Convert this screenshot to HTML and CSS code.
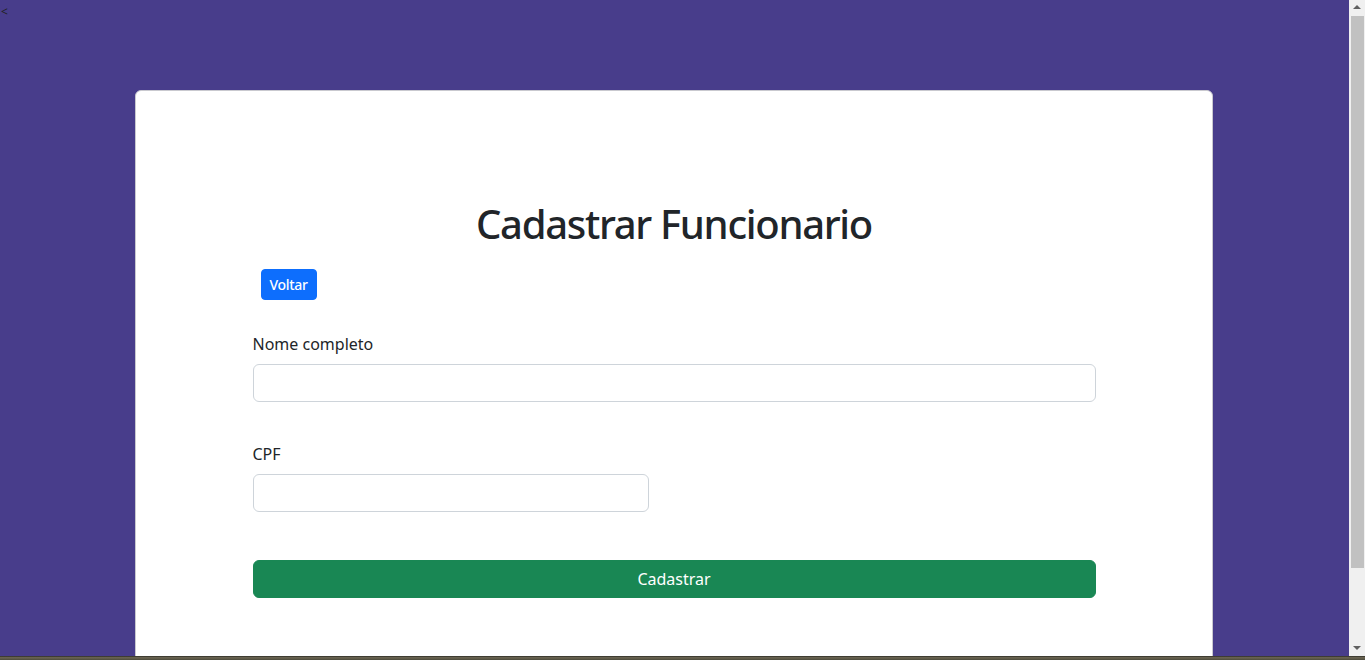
FILE: index.html
```html
<!DOCTYPE html>
<html lang="pt-BR">
<head>
<meta charset="utf-8">
<title>Cadastrar Funcionario</title>
<link rel="stylesheet" href="styles.css">
</head>
<body>
<div class="stray">&lt;</div>
<main class="card">
  <h1 class="title">Cadastrar Funcionario</h1>
  <div class="form">
    <div class="back-row"><a class="btn-back" href="#">Voltar</a></div>
    <div class="field field-nome">
      <label class="label" for="nome">Nome completo</label>
      <input class="input" id="nome" type="text">
    </div>
    <div class="field field-cpf">
      <label class="label" for="cpf">CPF</label>
      <input class="input input-short" id="cpf" type="text">
    </div>
    <button class="btn-submit" type="submit">Cadastrar</button>
  </div>
</main>
<div class="scrollbar">
  <div class="sb-arrow sb-up"></div>
  <div class="sb-thumb"></div>
  <div class="sb-arrow sb-down"></div>
</div>
<div class="taskbar"></div>
</body>
</html>
```
FILE: styles.css
```css
html { background: #483d8b; }
body {
  margin: 0;
  background: #483d8b;
  font-family: "Noto Sans", "Open Sans", sans-serif;
  color: #212529;
  line-height: 1.5;
  font-size: 16px;
}
.stray {
  font-size: 12px;
  line-height: 24px;
  height: 24px;
  padding-left: 1px;
  color: #222;
}
.card {
  margin: 66px 0 0 135px;
  width: 1076px;
  background: #fff;
  border: 1px solid #c9c9cf;
  border-radius: 6px;
  padding: 109px 0 152px;
}
.title {
  margin: 0 0 21px;
  text-align: center;
  font-size: 40px;
  font-weight: 500;
  line-height: 1.2;
  letter-spacing: -1.3px;
}
.form {
  width: 843px;
  margin: 0 auto;
}
.back-row { padding-left: 8px; margin-bottom: 32px; }
.btn-back {
  display: inline-block;
  background: #0d6efd;
  color: #fff;
  text-decoration: none;
  font-size: 14px;
  font-weight: 500;
  line-height: 21px;
  padding: 4px 8px;
  border: 1px solid #0d6efd;
  border-radius: 4px;
  letter-spacing: -0.3px;
}
.field-nome { margin-bottom: 40px; }
.field-cpf { margin-bottom: 48px; }
.label {
  display: block;
  margin-bottom: 8px;
  font-size: 16px;
  line-height: 24px;
}
.input {
  display: block;
  box-sizing: border-box;
  width: 100%;
  height: 38px;
  border: 1px solid #ced4da;
  border-radius: 6px;
  padding: 6px 12px;
  font: inherit;
  background: #fff;
}
.input-short { width: 396px; }
.btn-submit {
  display: block;
  width: 100%;
  height: 38px;
  background: #198754;
  border: 1px solid #198754;
  border-radius: 6px;
  color: #fff;
  font: inherit;
  font-size: 16px;
}
.scrollbar {
  position: fixed;
  top: 0;
  right: 0;
  bottom: 0;
  width: 16px;
  background: #f0f0f0;
  display: flex;
  flex-direction: column;
  align-items: center;
  z-index: 5;
}
.sb-arrow {
  width: 0;
  height: 0;
  border-left: 4px solid transparent;
  border-right: 4px solid transparent;
}
.sb-up { border-bottom: 4px solid #606060; margin-top: 5px; margin-bottom: 7px; }
.sb-thumb {
  width: 13px;
  height: 552px;
  background: #c1c1c1;
  margin-left: 1px;
}
.sb-down { border-top: 4px solid #606060; margin-top: auto; margin-bottom: 10px; }
.taskbar {
  position: fixed;
  left: 0;
  right: 0;
  bottom: 0;
  height: 4px;
  background: linear-gradient(to bottom, #2a2a24, #6b6552 40%, #4c4a3c);
  z-index: 10;
}
```
